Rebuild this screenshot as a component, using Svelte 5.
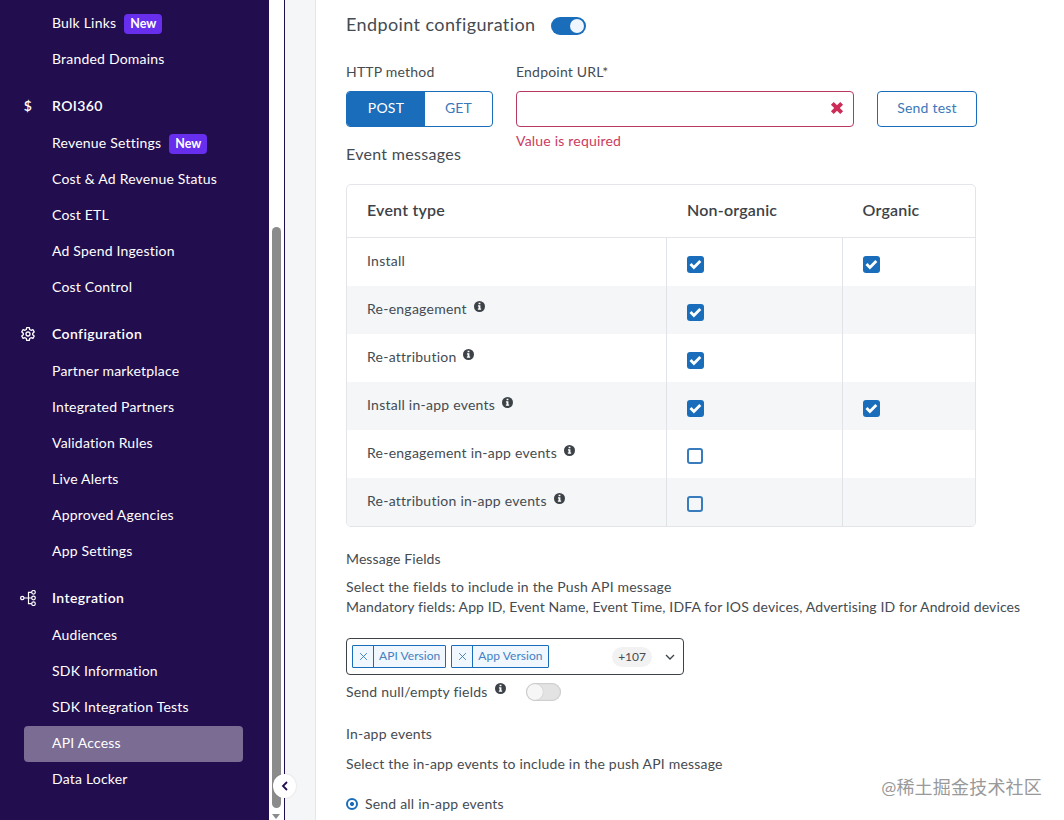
<script lang="ts">
	type Item = { label: string; isNew?: boolean };
	type Group = { title?: string; icon?: string; items: Item[] };

	const groups: Group[] = [
		{
			items: [{ label: 'Bulk Links', isNew: true }, { label: 'Branded Domains' }]
		},
		{
			title: 'ROI360',
			icon: 'dollar',
			items: [
				{ label: 'Revenue Settings', isNew: true },
				{ label: 'Cost & Ad Revenue Status' },
				{ label: 'Cost ETL' },
				{ label: 'Ad Spend Ingestion' },
				{ label: 'Cost Control' }
			]
		},
		{
			title: 'Configuration',
			icon: 'gear',
			items: [
				{ label: 'Partner marketplace' },
				{ label: 'Integrated Partners' },
				{ label: 'Validation Rules' },
				{ label: 'Live Alerts' },
				{ label: 'Approved Agencies' },
				{ label: 'App Settings' }
			]
		},
		{
			title: 'Integration',
			icon: 'nodes',
			items: [
				{ label: 'Audiences' },
				{ label: 'SDK Information' },
				{ label: 'SDK Integration Tests' },
				{ label: 'API Access' },
				{ label: 'Data Locker' }
			]
		}
	];

	let active = $state('API Access');
	let method = $state('POST');
	let endpointOn = $state(true);
	let sendNull = $state(false);

	// organic is null where the event has no organic variant
	let events = $state([
		{ name: 'Install', info: false, nonOrganic: true, organic: true },
		{ name: 'Re-engagement', info: true, nonOrganic: true, organic: null },
		{ name: 'Re-attribution', info: true, nonOrganic: true, organic: null },
		{ name: 'Install in-app events', info: true, nonOrganic: true, organic: true },
		{ name: 'Re-engagement in-app events', info: true, nonOrganic: false, organic: null },
		{ name: 'Re-attribution in-app events', info: true, nonOrganic: false, organic: null }
	]);

	let fields = $state(['API Version', 'App Version']);
</script>

{#snippet info()}
	<svg class="info" viewBox="0 0 12 12" width="11" height="11">
		<circle cx="6" cy="6" r="6" />
		<path d="M5 1.8h2v1.7H5zM4.3 4.7H7v3.6h.8v1.3H4.2V8.3H5V6h-.7z" fill="#fff" />
	</svg>
{/snippet}

{#snippet checkbox(checked: boolean, toggle: () => void)}
	<button class="checkbox" class:checked aria-label="toggle" onclick={toggle}>
		{#if checked}
			<svg viewBox="0 0 18 18" width="17" height="17">
				<path d="M3.7 8.6l3.6 3.6 6.8-6.8" fill="none" stroke="#fff" stroke-width="3" />
			</svg>
		{/if}
	</button>
{/snippet}

<div class="app">
	<nav class="sidebar">
		{#each groups as group}
			{#if group.title}
				<div class="group-title">
					<span class="group-icon">
						{#if group.icon === 'dollar'}
							<span class="dollar">$</span>
						{:else if group.icon === 'gear'}
							<svg viewBox="0 0 16 16" width="16" height="16" fill="none" stroke="#fff" stroke-width="1.3" stroke-linejoin="round">
								<path d="M6.7 1.6h2.6l.4 1.9 1.3.8 1.9-.7 1.3 2.3-1.5 1.3v1.6l1.5 1.3-1.3 2.3-1.9-.7-1.3.8-.4 1.9H6.7l-.4-1.9-1.3-.8-1.9.7-1.3-2.3 1.5-1.3V7.2L1.8 5.9l1.3-2.3 1.9.7 1.3-.8z" />
								<circle cx="8" cy="8" r="2" />
							</svg>
						{:else}
							<svg viewBox="0 0 16 16" width="16" height="16" fill="none" stroke="#fff" stroke-width="1.2">
								<circle cx="2.3" cy="8" r="1.7" />
								<circle cx="13.5" cy="2.3" r="1.8" />
								<circle cx="13.5" cy="8" r="1.8" />
								<circle cx="13.5" cy="13.7" r="1.8" />
								<path d="M4 8h7.7M11.7 2.3H8.5v11.4h3.2" />
							</svg>
						{/if}
					</span>
					<span class="group-label">{group.title}</span>
				</div>
			{/if}
			{#each group.items as item}
				<button class="nav-item" class:active={active === item.label} onclick={() => (active = item.label)}>
					{item.label}
					{#if item.isNew}<span class="new">New</span>{/if}
				</button>
			{/each}
		{/each}
	</nav>

	<div class="scrollbar">
		<div class="thumb"></div>
		<div class="arrow"></div>
		<button class="collapse" aria-label="Collapse menu">
			<svg viewBox="0 0 10 12" width="10" height="12">
				<path d="M7 2L3 6l4 4" fill="none" stroke="#220d4e" stroke-width="1.8" />
			</svg>
		</button>
	</div>

	<main>
		<div class="heading">
			<h2>Endpoint configuration</h2>
			<button class="switch" class:on={endpointOn} aria-label="Endpoint" onclick={() => (endpointOn = !endpointOn)}></button>
		</div>

		<div class="endpoint">
			<div class="method">
				<div class="label">HTTP method</div>
				<div class="segmented">
					{#each ['POST', 'GET'] as m}
						<button class:selected={method === m} onclick={() => (method = m)}>{m}</button>
					{/each}
				</div>
			</div>
			<div class="url">
				<div class="label">Endpoint URL*</div>
				<div class="input">
					<svg viewBox="0 0 12 12" width="14" height="14">
						<path d="M2 2l8 8M10 2l-8 8" stroke="#cc2c55" stroke-width="3.4" />
					</svg>
				</div>
				<div class="error">Value is required</div>
			</div>
			<button class="send">Send test</button>
		</div>

		<h3>Event messages</h3>

		<div class="table">
			<div class="row head">
				<div class="cell">Event type</div>
				<div class="cell">Non-organic</div>
				<div class="cell">Organic</div>
			</div>
			{#each events as event}
				<div class="row">
					<div class="cell name">
						{event.name}
						{#if event.info}{@render info()}{/if}
					</div>
					<div class="cell">
						{@render checkbox(event.nonOrganic, () => (event.nonOrganic = !event.nonOrganic))}
					</div>
					<div class="cell">
						{#if event.organic !== null}
							{@render checkbox(event.organic, () => (event.organic = !event.organic))}
						{/if}
					</div>
				</div>
			{/each}
		</div>

		<div class="section-title">Message Fields</div>
		<p class="fields-text">
			Select the fields to include in the Push API message<br />
			<span class="mandatory">Mandatory fields: App ID, Event Name, Event Time, IDFA for IOS devices, Advertising ID for Android devices</span>
		</p>

		<div class="select">
			{#each fields as field}
				<div class="tag">
					<button aria-label="Remove" onclick={() => (fields = fields.filter((f) => f !== field))}>
						<svg viewBox="0 0 8 8" width="9" height="9">
							<path d="M1 1l6 6M7 1L1 7" stroke="#3a78bd" stroke-width=".8" />
						</svg>
					</button>
					<span>{field}</span>
				</div>
			{/each}
			<span class="more">+107</span>
			<svg class="chevron" viewBox="0 0 10 8" width="10" height="8">
				<path d="M1 2l4 4 4-4" fill="none" stroke="#3c4248" stroke-width="1.3" />
			</svg>
		</div>

		<div class="null-fields">
			<span>Send null/empty fields</span>
			{@render info()}
			<button class="switch" class:on={sendNull} aria-label="Send null" onclick={() => (sendNull = !sendNull)}></button>
		</div>

		<div class="in-app">In-app events</div>
		<p class="in-app-text">Select the in-app events to include in the push API message</p>
		<div class="radio">
			<span class="dot"></span>
			Send all in-app events
		</div>
	</main>

	<div class="watermark">@稀土掘金技术社区</div>
</div>

<style>
	:global(body) {
		overflow: hidden;
	}

	.app {
		position: relative;
		display: flex;
		height: 820px;
		overflow: hidden;
		background: #f4f6f8;
		color: #454b51;
		font-family: Lato, 'Noto Sans CJK SC', sans-serif;
		font-size: 14px;
		letter-spacing: 0.2px;
	}

	button {
		padding: 0;
		border: 0;
		background: none;
		color: inherit;
		font: inherit;
		letter-spacing: inherit;
	}

	h2,
	h3,
	p {
		margin: 0;
		font-weight: 400;
	}

	.sidebar {
		box-sizing: border-box;
		width: 269px;
		flex: none;
		padding: 6px 26px 0 24px;
		background: #220d4e;
		color: #fff;
	}

	.nav-item {
		display: flex;
		align-items: center;
		box-sizing: border-box;
		width: 219px;
		height: 36px;
		padding: 0 0 3px 28px;
		border-radius: 4px;
		white-space: nowrap;
	}

	.nav-item.active {
		background: #7a6c93;
	}

	.new {
		height: 20px;
		margin: 2px 0 0 8px;
		padding: 0 6px;
		border-radius: 4px;
		background: #672eee;
		font-size: 12.5px;
		font-weight: 700;
		line-height: 19px;
		letter-spacing: 0;
	}

	.group-title {
		display: flex;
		align-items: center;
		height: 39px;
		padding-top: 9px;
		font-weight: 600;
	}

	.group-label {
		margin-bottom: 3px;
		letter-spacing: 0.4px;
	}

	.group-icon {
		display: flex;
		justify-content: center;
		width: 16px;
		margin: 0 16px 2px -4px;
	}

	.dollar {
		font-size: 14px;
	}

	.scrollbar {
		position: relative;
		box-sizing: border-box;
		width: 16px;
		flex: none;
		padding: 227px 0 0 3px;
		border-right: 1px solid #220d4e;
		background: #fff;
	}

	.thumb {
		width: 9px;
		height: 581px;
		border-radius: 5px;
		background: #8b8b8b;
	}

	.arrow {
		width: 0;
		margin-top: 6px;
		border: 4.5px solid transparent;
		border-top: 5px solid #8b8b8b;
		border-bottom: 0;
	}

	.collapse {
		position: absolute;
		top: 774px;
		left: 4px;
		display: flex;
		align-items: center;
		justify-content: center;
		width: 23px;
		height: 24px;
		border-radius: 50%;
		background: #fff;
		box-shadow: 0 0 2px rgba(0, 0, 0, 0.15);
	}

	main {
		flex: 1;
		margin-left: 30px;
		padding-left: 30px;
		border-left: 1px solid #e4e6e9;
		background: #fff;
	}

	.heading {
		display: flex;
		align-items: center;
		height: 51px;
	}

	h2 {
		width: 205px;
		padding-bottom: 3px;
		font-size: 18px;
		letter-spacing: 0.4px;
		white-space: nowrap;
	}

	.switch {
		box-sizing: border-box;
		width: 35px;
		height: 18px;
		border-radius: 9px;
		background: #e3e3e3;
		box-shadow: inset 0 0 1px 1px #ccc;
	}

	.switch::before {
		content: '';
		display: block;
		width: 16px;
		height: 16px;
		margin: 0 1px;
		border-radius: 50%;
		background: #f6f6f6;
		box-shadow: 0 0 1px #aaa;
	}

	.switch.on {
		background: #1a6dba;
		box-shadow: none;
	}

	.switch.on::before {
		width: 14px;
		height: 14px;
		margin-left: 19px;
		background: #eff6fd;
		box-shadow: none;
	}

	.endpoint {
		display: flex;
		align-items: flex-start;
		height: 93px;
		padding-top: 12px;
		box-sizing: border-box;
	}

	.label {
		height: 28px;
		line-height: 18px;
	}

	.segmented {
		display: flex;
		box-sizing: border-box;
		width: 147px;
		height: 36px;
		overflow: hidden;
		border: 1px solid #1a6dba;
		border-radius: 4px;
		color: #3a78b8;
	}

	.segmented button {
		flex: 67;
		padding-bottom: 3px;
	}

	.segmented button:first-child {
		flex: 78;
	}

	.segmented .selected {
		background: #1a6dba;
		color: #fff;
	}

	.url {
		width: 338px;
		margin: 0 23px;
	}

	.input {
		display: flex;
		align-items: center;
		justify-content: flex-end;
		box-sizing: border-box;
		height: 36px;
		padding: 0 9px 2px 0;
		border: 1px solid #b93a60;
		border-radius: 4px;
	}

	.error {
		margin-top: 4px;
		color: #cc3a60;
		line-height: 20px;
	}

	.send {
		box-sizing: border-box;
		width: 100px;
		height: 36px;
		margin-top: 28px;
		padding-bottom: 3px;
		border: 1px solid #1a6dba;
		border-radius: 4px;
		color: #3a78b8;
	}

	h3 {
		height: 40px;
		font-size: 16px;
		line-height: 20px;
		letter-spacing: 0.3px;
	}

	.table {
		box-sizing: border-box;
		width: 630px;
		overflow: hidden;
		border: 1px solid #e3e5e8;
		border-radius: 5px;
	}

	.row {
		display: grid;
		grid-template-columns: 320px 176px 1fr;
		height: 48px;
	}

	.row:nth-child(odd):not(.head) {
		background: #f4f6f8;
	}

	.cell {
		padding: 18px 0 0 20px;
	}

	.cell:last-child {
		padding-left: 19.5px;
	}

	.cell:not(:last-child) {
		border-right: 1px solid #e0e3e7;
	}

	.head {
		height: 52px;
		border-bottom: 1px solid #e3e5e8;
		color: #3c4248;
		font-size: 16px;
		font-weight: 600;
		line-height: 50px;
	}

	.head .cell {
		padding-top: 0;
		border: 0;
	}

	.cell.name {
		padding-top: 0;
		line-height: 46px;
		letter-spacing: 0.25px;
	}

	.info {
		margin: 0 0 7px 3px;
		vertical-align: middle;
		fill: #3c4248;
	}

	.checkbox {
		display: block;
		box-sizing: border-box;
		width: 16px;
		height: 16px;
		border: 2px solid #397cbe;
		border-radius: 3px;
	}

	.checkbox.checked {
		width: 17px;
		height: 17px;
		border: 0;
		background: #1a6dba;
	}

	.checkbox svg {
		display: block;
	}

	.section-title {
		margin-top: 22px;
		line-height: 20px;
		letter-spacing: 0.1px;
	}

	.fields-text {
		margin-top: 8px;
		line-height: 20px;
		white-space: nowrap;
	}

	.mandatory {
		letter-spacing: 0.13px;
	}

	.select {
		display: flex;
		align-items: center;
		gap: 5px;
		box-sizing: border-box;
		width: 338px;
		height: 37px;
		margin-top: 21px;
		padding: 0 8px 0 5px;
		border: 1px solid #3c4248;
		border-radius: 4px;
	}

	.tag {
		display: flex;
		box-sizing: border-box;
		height: 23px;
		border: 1px solid #1a6dba;
		border-radius: 1px;
		background: #f0f7fe;
		color: #4480c2;
		font-size: 12px;
		line-height: 20px;
		letter-spacing: 0.05px;
	}

	.tag button {
		width: 21px;
		border-right: 1px solid #1a6dba;
	}

	.tag span {
		padding: 0 5px;
	}

	.more {
		margin-left: auto;
		padding: 0 6px;
		border-radius: 11px;
		background: #f2f2f2;
		font-size: 12px;
		line-height: 20px;
		letter-spacing: 0;
	}

	.chevron {
		margin-left: 8px;
	}

	.null-fields {
		display: flex;
		align-items: center;
		height: 33px;
	}

	.null-fields > span {
		margin-bottom: 1px;
	}

	.null-fields .info {
		margin-left: 7px;
	}

	.null-fields .switch {
		margin-left: 20px;
	}

	.in-app {
		margin-top: 16px;
		line-height: 20px;
	}

	.in-app-text {
		margin-top: 10px;
		line-height: 20px;
	}

	.radio {
		display: flex;
		align-items: center;
		margin-top: 20px;
		line-height: 20px;
	}

	.dot {
		box-sizing: border-box;
		width: 12px;
		height: 12px;
		margin-right: 7px;
		border: 2px solid #1a6dba;
		border-radius: 50%;
		background: radial-gradient(circle, #1a6dba 1.7px, #fff 2.3px);
	}

	.watermark {
		position: absolute;
		top: 774px;
		right: 22px;
		color: #999;
		font-size: 18px;
		line-height: 26px;
		letter-spacing: 0.2px;
	}
</style>
